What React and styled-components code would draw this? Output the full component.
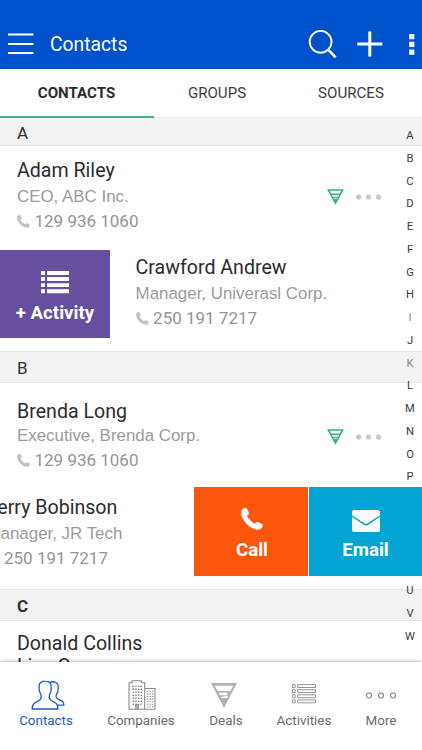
import React from 'react';
import styled, { createGlobalStyle } from 'styled-components';

const Global = createGlobalStyle`
  * { box-sizing: border-box; }
  body { margin: 0; background: #fff; font-family: Roboto, sans-serif; color: #303030; }
`;

const Screen = styled.div`
  width: 422px;
  height: 750px;
  display: flex;
  flex-direction: column;
  overflow: hidden;
  background: #fff;
`;

const Header = styled.header`
  flex: none;
  height: 69px;
  padding: 19px 7px 0 8px;
  display: flex;
  align-items: center;
  background: #0052cc;
  color: #fff;
  svg { display: block; flex: none; }
`;

const Title = styled.h1`
  flex: 1;
  margin: 0 0 0 16px;
  padding-top: 2px;
  font-size: 19.3px;
  font-weight: 400;
  line-height: 24px;
`;

const Tools = styled.div`
  display: flex;
  align-items: center;
`;

const ToolGap = styled.span`
  width: ${(p) => p.$size}px;
`;

const Tabs = styled.nav`
  flex: none;
  height: 49px;
  display: grid;
  grid-template-columns: 154px 126px 142px;
`;

const Tab = styled.div`
  display: flex;
  align-items: center;
  justify-content: center;
  padding: ${(p) => (p.$active ? '1px 1px 0 0' : '0')};
  font-size: 15.1px;
  font-weight: ${(p) => (p.$active ? 700 : 400)};
  color: ${(p) => (p.$active ? '#2b2b2b' : '#3c3c3c')};
  border-bottom: ${(p) => (p.$active ? '2px solid #3fb27f' : '1px solid #e8e8e8')};
`;

const List = styled.main`
  flex: none;
  height: 544px;
  position: relative;
  overflow: hidden;
`;

const Section = styled.div`
  height: ${(p) => p.$height}px;
  display: flex;
  align-items: center;
  padding: 2px 0 0 17px;
  background: #f3f3f3;
  border-top: 1px solid ${(p) => (p.$first ? '#f3f3f3' : '#e6e6e6')};
  border-bottom: 1px solid #e6e6e6;
  font-size: 17px;
  line-height: 20px;
  font-weight: ${(p) => (p.$bold ? 700 : 400)};
`;

const Row = styled.div`
  height: ${(p) => p.$height}px;
  display: flex;
  align-items: flex-start;
`;

const Info = styled.div`
  flex: 1;
  white-space: nowrap;
  padding-top: ${(p) => p.$top ?? 0}px;
  padding-left: ${(p) => p.$left ?? 17}px;
  margin-left: ${(p) => p.$shift ?? 0}px;
`;

const Name = styled.div`
  font-size: 19.6px;
  line-height: ${(p) => p.$line ?? 26}px;
  color: #2b2b2b;
`;

const Role = styled.div`
  font-family: 'Liberation Sans', Arial, sans-serif;
  font-size: 16.9px;
  line-height: 24px;
  margin-top: ${(p) => p.$gap ?? 1}px;
  color: #9b9b9b;
`;

const Phone = styled.div`
  display: flex;
  align-items: center;
  gap: 4.5px;
  font-size: 17px;
  line-height: 25px;
  color: #959595;
  svg { color: #c2c2c2; }
`;

const RowTools = styled.div`
  display: flex;
  align-items: center;
  gap: 12px;
  padding: ${(p) => p.$top}px 40px 0 0;
  svg { display: block; }
`;

const Action = styled.div`
  position: relative;
  z-index: 2;
  flex: none;
  width: ${(p) => p.$width}px;
  height: ${(p) => p.$height}px;
  display: flex;
  flex-direction: column;
  align-items: center;
  padding: ${(p) => p.$top}px 0 0 ${(p) => p.$left ?? 0}px;
  background: ${(p) => p.$color};
  color: #fff;
  svg { display: block; }
`;

const ActionLabel = styled.span`
  margin-top: ${(p) => p.$gap}px;
  font-size: 18.7px;
  font-weight: 700;
  line-height: 24px;
  white-space: nowrap;
`;

const Actions = styled.div`
  position: relative;
  z-index: 2;
  display: flex;
  gap: 1px;
`;

const Index = styled.div`
  position: absolute;
  z-index: 1;
  top: 7px;
  right: 4px;
  width: 16px;
  display: flex;
  flex-direction: column;
`;

const Letter = styled.span`
  height: 22.77px;
  line-height: 22.77px;
  text-align: center;
  font-size: 11.2px;
  color: ${(p) => (p.$dim ? '#8a8a8a' : '#3c3c3c')};
`;

const BottomBar = styled.nav`
  position: relative;
  z-index: 3;
  flex: none;
  height: 88px;
  padding: 17px 6px 0 0;
  display: grid;
  grid-template-columns: 92px 98px 72px 84px 70px;
  background: #fff;
  box-shadow: 0 -1px 3px rgba(0, 0, 0, 0.25);
`;

const NavItem = styled.div`
  display: flex;
  flex-direction: column;
  align-items: center;
  font-size: 13.4px;
  line-height: 18px;
  color: ${(p) => (p.$active ? '#1b5cc8' : '#6b6b6b')};
`;

const NavIcon = styled.div`
  height: 33px;
  margin-left: ${(p) => p.$nudge ?? 0}px;
  padding-bottom: ${(p) => p.$lift ?? 1}px;
  display: flex;
  align-items: center;
  svg { display: block; }
`;

const MenuIcon = () => (
  <svg width="26" height="24" viewBox="0 0 26 24">
    <path d="M0 2.500h25.500M0 12h25.500M0 21h25.500" stroke="currentColor" strokeWidth="2.200" />
  </svg>
);

const SearchIcon = () => (
  <svg width="30" height="30" viewBox="0 0 30 30" fill="none" stroke="currentColor">
    <circle cx="12.600" cy="12.800" r="10.900" strokeWidth="1.900" />
    <path d="M20 20.300l7.600 8" strokeWidth="2.500" />
  </svg>
);

const PlusIcon = () => (
  <svg width="26" height="26" viewBox="0 0 26 26">
    <path d="M12.800 .5v25M.3 13h25" stroke="currentColor" strokeWidth="3" />
  </svg>
);

const DotsIcon = () => (
  <svg width="6" height="21" viewBox="0 0 6 21" fill="currentColor">
    <path d="M.2 0h5.200v5.200H.2zM.2 7.800h5.200V13H.2zM.2 15.600h5.200v5.200H.2z" />
  </svg>
);

const Handset = ({ size }) => (
  <svg width={size} height={size} viewBox="0 0 22 22" fill="currentColor">
    <path d="M2.700.6C3.800.1 5.200-.2 5.800.5L7.800 4.400C8.300 5.300 8 5.900 7.400 6.500L6 8C7.500 11 10.500 14 13.700 15.700L15.300 14.400C16 13.900 16.500 13.800 17.200 14.100L21 16C21.900 16.600 21.900 17.300 21.500 18.500C20.800 20.700 18.500 21.700 16.400 21.700C8.600 21.100 1 12.700.1 5.600C0 3.400.8 1.500 2.700.6Z" />
  </svg>
);

const Funnel = ({ width, height, color }) => (
  <svg width={width} height={height} viewBox="0 0 26 24">
    <path
      fill={color}
      fillRule="evenodd"
      d="M0 0H26L13 24ZM4.300 2.600L6.300 6.800H19.700L21.700 2.600ZM7.500 9.400L8.600 11.600H17.400L18.500 9.400ZM9.700 13.600L10.200 14.500H15.800L16.300 13.600Z"
    />
  </svg>
);

const DealFunnel = () => (
  <svg width="26" height="25" viewBox="0 0 26 25">
    <path
      fill="#b3b3b3"
      fillRule="evenodd"
      d="M0 0H26L13 25ZM3.800 2.700L6.500 8H19.500L22.200 2.700ZM7.400 9.700L8.700 12.200H15.700L16.700 9.700ZM9.800 14L10.300 15H16.200L17.300 12.800Z"
    />
  </svg>
);

const More = () => (
  <svg width="26" height="6" viewBox="0 0 26 6" fill="#c8c8c8">
    <circle cx="2.600" cy="3" r="2.600" />
    <circle cx="12.600" cy="3" r="2.600" />
    <circle cx="22.600" cy="3" r="2.600" />
  </svg>
);

const ListIcon = () => (
  <svg width="28" height="23" viewBox="0 0 28 23" fill="currentColor">
    {[0, 6.1, 12.2, 18.3].map((y) => (
      <path key={y} d={`M0 ${y}h4v3.900h-4zM6 ${y}h22v3.900h-22z`} />
    ))}
  </svg>
);

const MailIcon = () => (
  <svg width="28" height="22" viewBox="0 0 28 22" fill="currentColor">
    <path d="M2.500 0h23A2.500 2.500 0 0 1 28 2.500v2.700L15.700 13.200q-1.700 1.100-3.400 0L0 5.200V2.500A2.500 2.500 0 0 1 2.500 0Z" />
    <path d="M0 6.800l11.700 7.900q2.300 1.500 4.600 0L28 6.800v12.700a2.500 2.500 0 0 1-2.500 2.500h-23A2.500 2.500 0 0 1 0 19.500Z" />
  </svg>
);

const PeopleIcon = () => (
  <svg width="34" height="30" viewBox="0 0 36 31" preserveAspectRatio="none" fill="none" stroke="currentColor" strokeWidth="1.400" strokeLinejoin="round">
    <path d="M15 1.200C9.800 1 8 4 8.600 8.500C8.100 11.500 9.300 13.300 10.400 15C11.500 18.500 10.600 20.300 7.500 21.800C3.500 23.600 1.500 24.500 1.200 30H28.400C28.300 24.500 26.500 23.500 22.500 21.800C19.300 20.300 18.700 18.500 19.700 15C21 13 22 11 21.300 8.500C22 4 20.200 1.200 15 1.200Z" />
    <path d="M19.500 2.300C25.500.6 29.700 3.400 28.700 9C29.100 11.700 28.100 13.300 26.900 15C26 18 26.700 19 29.500 20.200C33.200 21.500 34.600 22.500 34.800 26H28.300" />
  </svg>
);

const BuildingIcon = () => (
  <svg width="28" height="30" viewBox="0 0 28 30" fill="none" stroke="#8b8b8b" strokeWidth="1.100">
    <path d="M1 29.200V2.800H4.200V.8H13.300V2.800H16.700V29.200ZM16.700 8.500H27V29.200H16.700" />
    <path d="M4.500 6.300h10M4.500 9.300h10M4.500 12.300h10M4.500 15.300h10M4.500 18.300h10M4.500 21.300h10M4.500 24.300h2.500M12 24.300h2.500" strokeDasharray="1.500 1.200" strokeWidth="1.600" />
    <path d="M19 11.300h6.500M19 13.900h6.500M19 16.500h6.500M19 19.100h6.500M19 21.700h6.500M19 24.300h6.500M19 26.700h6.500" strokeDasharray="1.300 1.200" />
    <path d="M8 29v-4.600h2.200V29" strokeWidth="1.500" />
  </svg>
);

const ActivitiesIcon = () => (
  <svg width="24" height="20" viewBox="0 0 24 20" fill="none" stroke="#8a8a8a" strokeWidth=".9">
    {[0.6, 5.7, 10.8, 15.9].map((y) => (
      <path key={y} d={`M.5 ${y}h2.700v2.900h-2.700zM5.700 ${y}h17.800v2.900h-17.800z`} />
    ))}
  </svg>
);

const CirclesIcon = () => (
  <svg width="30" height="7" viewBox="0 0 30 7" fill="none" stroke="#858585" strokeWidth="1.100">
    <circle cx="3" cy="3.500" r="2.500" />
    <circle cx="15" cy="3.500" r="2.500" />
    <circle cx="27" cy="3.500" r="2.500" />
  </svg>
);

const Contact = ({ name, role, phone, gap, ...place }) => (
  <Info {...place}>
    <Name>{name}</Name>
    <Role $gap={gap}>{role}</Role>
    <Phone><Handset size={13} />{phone}</Phone>
  </Info>
);

const StatusTools = ({ top }) => (
  <RowTools $top={top}>
    <Funnel width={17} height={16} color="#38b27c" />
    <More />
  </RowTools>
);

export default function App() {
  return (
    <Screen>
      <Global />
      <Header>
        <MenuIcon />
        <Title>Contacts</Title>
        <Tools>
          <SearchIcon />
          <ToolGap $size={19} />
          <PlusIcon />
          <ToolGap $size={26} />
          <DotsIcon />
        </Tools>
      </Header>
      <Tabs>
        <Tab $active>CONTACTS</Tab>
        <Tab>GROUPS</Tab>
        <Tab>SOURCES</Tab>
      </Tabs>
      <List>
        <Section $height={28} $first>A</Section>
        <Row $height={104}>
          <Contact name="Adam Riley" role="CEO, ABC Inc." phone="129 936 1060" $top={12} />
          <StatusTools top={43} />
        </Row>
        <Row $height={101}>
          <Action $width={110} $height={88} $top={21} $color="#654f9e">
            <ListIcon />
            <ActionLabel $gap={7}>+ Activity</ActionLabel>
          </Action>
          <Contact name="Crawford Andrew" role="Manager, Univerasl Corp." phone="250 191 7217" $top={5} $left={25.6} />
        </Row>
        <Section $height={32}>B</Section>
        <Row $height={104}>
          <Contact name="Brenda Long" role="Executive, Brenda Corp." phone="129 936 1060" gap={-1} $top={16} />
          <StatusTools top={46} />
        </Row>
        <Row $height={102}>
          <Contact name="Jerry Bobinson" role="Manager, JR Tech" phone="250 191 7217" $top={8} $left={0} $shift={-13.5} />
          <Actions>
            <Action $width={114} $height={89} $top={21} $left={2} $color="#ff560d">
              <Handset size={22} />
              <ActionLabel $gap={8}>Call</ActionLabel>
            </Action>
            <Action $width={113} $height={89} $top={23} $color="#02a4d3">
              <MailIcon />
              <ActionLabel $gap={6}>Email</ActionLabel>
            </Action>
          </Actions>
        </Row>
        <Section $height={32} $bold>C</Section>
        <Row $height={60}>
          <Info $top={12}>
            <Name $line={22.5}>Donald Collins</Name>
            <Name $line={22.5}>Liza Corp.</Name>
          </Info>
        </Row>
        <Index>
          {'ABCDEFGHIJKLMNOPQRSTUVW'.split('').map((c) => (
            <Letter key={c} $dim={c === 'I' || c === 'K'}>{c}</Letter>
          ))}
        </Index>
      </List>
      <BottomBar>
        <NavItem $active><NavIcon $nudge={3}><PeopleIcon /></NavIcon>Contacts</NavItem>
        <NavItem><NavIcon $nudge={1}><BuildingIcon /></NavIcon>Companies</NavItem>
        <NavItem><NavIcon $nudge={-4}><DealFunnel /></NavIcon>Deals</NavItem>
        <NavItem><NavIcon $lift={3}><ActivitiesIcon /></NavIcon>Activities</NavItem>
        <NavItem><NavIcon><CirclesIcon /></NavIcon>More</NavItem>
      </BottomBar>
    </Screen>
  );
}
